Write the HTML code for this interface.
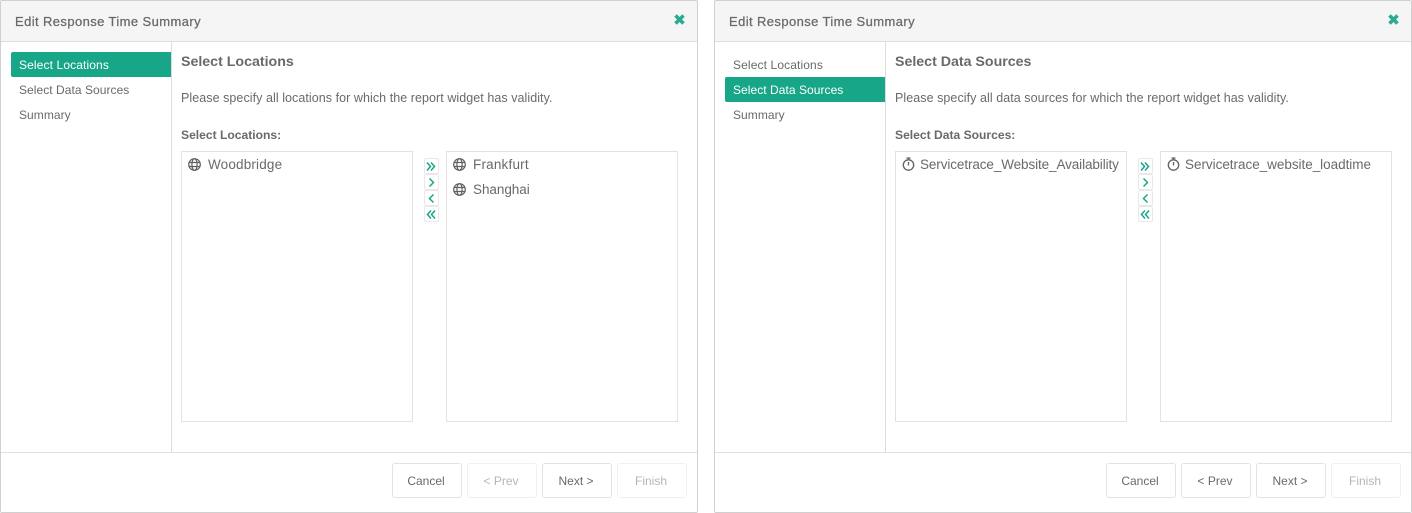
<!DOCTYPE html>
<html><head><meta charset="utf-8">
<style>
html,body{margin:0;padding:0;background:#fff;width:1412px;height:513px;overflow:hidden}
body{position:relative;font-family:"Liberation Sans",sans-serif;color:#676a6c}
.d{position:absolute;top:0;width:698px;height:513px;box-sizing:border-box;border:1px solid #d0d0d0;border-radius:2px;background:#fff;overflow:hidden}
.d>*{position:absolute}
.h{left:0;top:0;width:696px;height:40px;background:#f5f5f5;border-bottom:1px solid #ddd}
.sb{left:170px;top:41px;width:1px;height:410px;background:#ddd}
.fl{left:0;top:451px;width:696px;height:1px;background:#e0e0e0}
.t{position:absolute;white-space:nowrap;line-height:16px}
.title{font-size:13px;color:#676a6c;-webkit-text-stroke:.25px #676a6c;letter-spacing:.4px;left:14px;top:13px}
.m{font-size:12px;letter-spacing:.05px}
.act{left:10px;top:51px;width:160px;height:25px;background:#18a689;border-radius:2px 0 0 2px}
.box{width:230px;height:269px;border:1px solid #e2e2e2;top:150px}
.it{font-size:13.5px}
.h2{left:180px;top:53px;font-size:14.2px;font-weight:bold}
.p{left:180px;top:89px;font-size:12.5px;letter-spacing:.06px}
.lb{left:180px;top:126px;font-size:12.1px;font-weight:bold}
.b{width:68px;height:33px;top:462px;border:1px solid #e2e2e2;border-radius:3px;text-align:center;font-size:12px;line-height:35px;color:#676a6c;text-indent:-2px}
.b.off{border-color:#f0f0f0;color:#b5b5b5}
.mv{width:13px;height:14px;border:1px solid #e8e8e8;border-radius:2px;left:423px}
svg{position:absolute;overflow:visible}
</style></head><body>

<div class="d" style="left:0">
<div class="h"></div><div class="sb"></div><div class="fl"></div>
<span class="t title">Edit Response Time Summary</span>
<svg style="left:672px;top:12px" width="13" height="13" viewBox="0 0 13 13"><path d="M2.500 2.500L10.500 10.500M10.500 2.500L2.500 10.500" stroke="#2baa90" stroke-width="3.600"/></svg>
<div class="act"></div>
<span class="t m" style="left:18px;top:56px;color:#fff;letter-spacing:.12px">Select Locations</span>
<span class="t m" style="left:18px;top:81px">Select Data Sources</span>
<span class="t m" style="left:18px;top:106px">Summary</span>
<span class="t h2">Select Locations</span>
<span class="t p">Please specify all locations for which the report widget has validity.</span>
<span class="t lb">Select Locations:</span>
<div class="box" style="left:180px"></div><div class="box" style="left:445px"></div>
<svg style="left:187px;top:157px" width="13" height="13" viewBox="0 0 13 13" fill="none" stroke="#5f6264" stroke-width="1.200"><circle cx="6.500" cy="6.500" r="5.800"/><ellipse cx="6.500" cy="6.500" rx="2.600" ry="5.800"/><path d="M1 4.500H12M1 8.500H12"/></svg>
<span class="t it" style="left:207px;top:156px;letter-spacing:.17px">Woodbridge</span>
<svg style="left:452px;top:157px" width="13" height="13" viewBox="0 0 13 13" fill="none" stroke="#5f6264" stroke-width="1.200"><circle cx="6.500" cy="6.500" r="5.800"/><ellipse cx="6.500" cy="6.500" rx="2.600" ry="5.800"/><path d="M1 4.500H12M1 8.500H12"/></svg>
<span class="t it" style="left:472px;top:156px;letter-spacing:.2px">Frankfurt</span>
<svg style="left:452px;top:182px" width="13" height="13" viewBox="0 0 13 13" fill="none" stroke="#5f6264" stroke-width="1.200"><circle cx="6.500" cy="6.500" r="5.800"/><ellipse cx="6.500" cy="6.500" rx="2.600" ry="5.800"/><path d="M1 4.500H12M1 8.500H12"/></svg>
<span class="t it" style="left:472px;top:181px;letter-spacing:-.05px">Shanghai</span>
<div class="mv" style="top:157px"></div><div class="mv" style="top:173px"></div><div class="mv" style="top:189px"></div><div class="mv" style="top:205px"></div>
<svg style="left:423px;top:157px" width="15" height="64" fill="none" stroke="#18a689" stroke-width="1.500"><path d="M3 4.500L6.500 8.500L3 12.500M7 4.500L10.500 8.500L7 12.500M5.500 20.500L9.500 24.500L5.500 28.500M9.500 36.500L5.500 40.500L9.500 44.500M7 52.500L3.500 56.500L7 60.500M11 52.500L7.500 56.500L11 60.500"/></svg>
<div class="b" style="left:391px">Cancel</div><div class="b off" style="left:466px">&lt; Prev</div><div class="b" style="left:541px">Next &gt;</div><div class="b off" style="left:616px">Finish</div>
</div>

<div class="d" style="left:714px">
<div class="h"></div><div class="sb"></div><div class="fl"></div>
<span class="t title">Edit Response Time Summary</span>
<svg style="left:672px;top:12px" width="13" height="13" viewBox="0 0 13 13"><path d="M2.500 2.500L10.500 10.500M10.500 2.500L2.500 10.500" stroke="#2baa90" stroke-width="3.600"/></svg>
<div class="act" style="top:76px"></div>
<span class="t m" style="left:18px;top:56px;letter-spacing:.12px">Select Locations</span>
<span class="t m" style="left:18px;top:81px;color:#fff">Select Data Sources</span>
<span class="t m" style="left:18px;top:106px">Summary</span>
<span class="t h2">Select Data Sources</span>
<span class="t p">Please specify all data sources for which the report widget has validity.</span>
<span class="t lb">Select Data Sources:</span>
<div class="box" style="left:180px"></div><div class="box" style="left:445px"></div>
<svg style="left:187px;top:156px" width="13" height="14" viewBox="0 0 13 14" fill="none" stroke="#5f6264" stroke-width="1.300"><circle cx="6.500" cy="8" r="5.200"/><path d="M4.500 1H8.500M6.500 1V3M6.500 5V8.500"/></svg>
<span class="t it" style="left:205px;top:156px;letter-spacing:-.1px">Servicetrace_Website_Availability</span>
<svg style="left:452px;top:156px" width="13" height="14" viewBox="0 0 13 14" fill="none" stroke="#5f6264" stroke-width="1.300"><circle cx="6.500" cy="8" r="5.200"/><path d="M4.500 1H8.500M6.500 1V3M6.500 5V8.500"/></svg>
<span class="t it" style="left:470px;top:156px;letter-spacing:-.03px">Servicetrace_website_loadtime</span>
<div class="mv" style="top:157px"></div><div class="mv" style="top:173px"></div><div class="mv" style="top:189px"></div><div class="mv" style="top:205px"></div>
<svg style="left:423px;top:157px" width="15" height="64" fill="none" stroke="#18a689" stroke-width="1.500"><path d="M3 4.500L6.500 8.500L3 12.500M7 4.500L10.500 8.500L7 12.500M5.500 20.500L9.500 24.500L5.500 28.500M9.500 36.500L5.500 40.500L9.500 44.500M7 52.500L3.500 56.500L7 60.500M11 52.500L7.500 56.500L11 60.500"/></svg>
<div class="b" style="left:391px">Cancel</div><div class="b" style="left:466px">&lt; Prev</div><div class="b" style="left:541px">Next &gt;</div><div class="b off" style="left:616px">Finish</div>
</div>

</body></html>
